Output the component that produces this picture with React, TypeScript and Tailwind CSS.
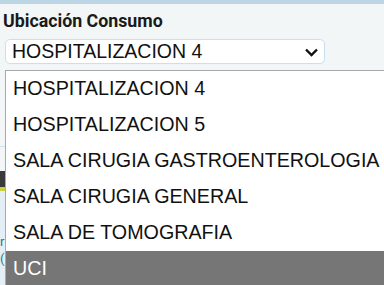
import React from "react";

const items = [
  "HOSPITALIZACION 4",
  "HOSPITALIZACION 5",
  "SALA CIRUGIA GASTROENTEROLOGIA",
  "SALA CIRUGIA GENERAL",
  "SALA DE TOMOGRAFIA",
  "UCI",
];

export default function App() {
  return (
    <div className="relative w-[384px] h-[285px] overflow-hidden bg-[#f2f6f7]">
      <div className="h-[4px] bg-[#bcd6e6]" />
      <div className="pl-[3px] pt-[6px]">
        <div
          className="text-[17.8px] font-bold text-[#1a1a1a] leading-[22px]"
          style={{ fontFamily: "Roboto, sans-serif" }}
        >
          Ubicación Consumo
        </div>
        <div className="mt-[7px] ml-[2px] w-[320px] h-[25px] flex items-center justify-between rounded-[5px] border border-[#c9e0f0] bg-white pl-[6px] pr-[5px]">
          <span
            className="text-[19.5px] text-[#111] leading-none"
            style={{ fontFamily: "'Liberation Sans', Arial, sans-serif" }}
          >
            HOSPITALIZACION 4
          </span>
          <svg width="15" height="10" viewBox="0 0 15 10">
            <path d="M2 2.5 L7.5 8 L13 2.5" fill="none" stroke="#111" strokeWidth="2.4" />
          </svg>
        </div>
      </div>
      {/* page content behind the open list */}
      <div className="mt-[82px] h-px bg-[#d6e2ea] w-[8px]" />
      <div className="mt-[24px] h-[20px] w-[8px] bg-[#3a3a3a] flex items-end">
        <div className="h-[4px] w-[5px] bg-[#c8d040]" />
      </div>
      <div
        className="h-[100px] w-[8px] bg-[#e3eff5] flex flex-col pt-[44px] gap-[4px] text-[13px] text-[#2a7a8a] leading-none"
        style={{ fontFamily: "Roboto, sans-serif" }}
      >
        <span>r</span>
        <span>(</span>
      </div>

      {/* open dropdown list */}
      <div className="absolute left-[5px] right-0 top-[70px] bg-white border-l border-t border-[#a9a9a9]">
        {items.map((it) => {
          const sel = it === "UCI";
          return (
            <div
              key={it}
              className={
                sel
                  ? "h-[36px] flex items-center pl-[7px] bg-[#767676] text-white whitespace-nowrap"
                  : "h-[36px] flex items-center pl-[7px] text-[#111] whitespace-nowrap"
              }
              style={{ fontFamily: "'Liberation Sans', Arial, sans-serif", fontSize: "19.7px" }}
            >
              {it}
            </div>
          );
        })}
      </div>
    </div>
  );
}
